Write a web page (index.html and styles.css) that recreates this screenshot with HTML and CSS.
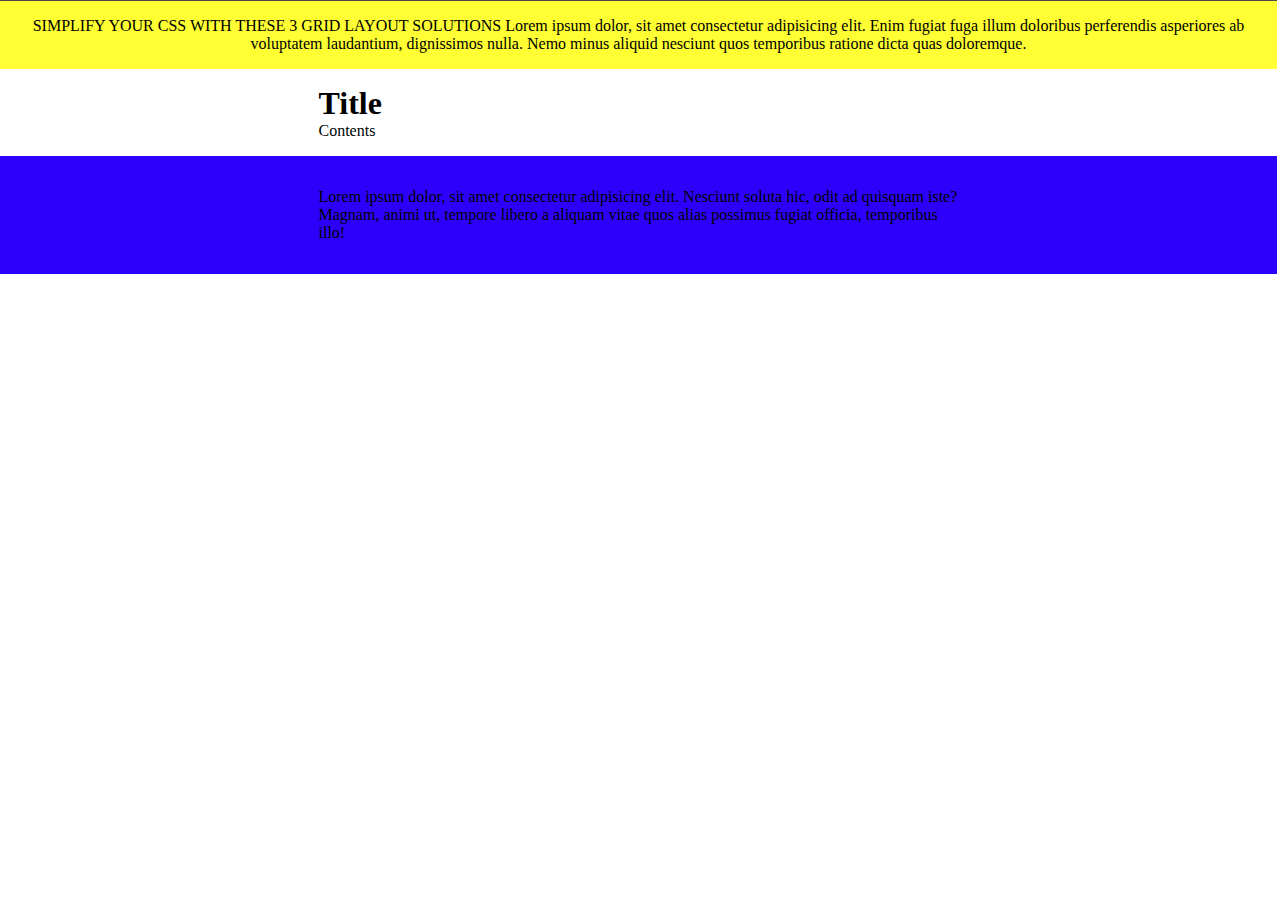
FILE: index.html
```html
<!DOCTYPE html>
<html lang="en">
<head>
<meta charset="utf-8">
<title>Grid Layout</title>
<link rel="stylesheet" href="styles.css">
</head>
<body>
<div class="page">
  <header class="banner">
    <p class="banner-text">SIMPLIFY YOUR CSS WITH THESE 3 GRID LAYOUT SOLUTIONS Lorem ipsum dolor, sit amet consectetur adipisicing elit. Enim fugiat fuga illum doloribus perferendis asperiores ab voluptatem laudantium, dignissimos nulla. Nemo minus aliquid nesciunt quos temporibus ratione dicta quas doloremque.</p>
  </header>
  <section class="intro">
    <div class="column">
      <h1 class="title">Title</h1>
      <div class="contents">Contents</div>
    </div>
  </section>
  <section class="feature">
    <div class="column">
      <p class="feature-text">Lorem ipsum dolor, sit amet consectetur adipisicing elit. Nesciunt soluta hic, odit ad quisquam iste? Magnam, animi ut, tempore libero a aliquam vitae quos alias possimus fugiat officia, temporibus illo!</p>
    </div>
  </section>
</div>
</body>
</html>
```
FILE: styles.css
```css
html, body {
  margin: 0;
  padding: 0;
  background: #ffffff;
}
body {
  font-family: "Liberation Serif", "Times New Roman", serif;
  font-size: 16px;
  color: #000;
  border-top: 1px solid #4a4a4a;
}
.page {
  display: flex;
  flex-direction: column;
}
.banner {
  background: #ffff33;
  padding: 16px 32px;
}
.banner-text {
  margin: 0;
  text-align: center;
  line-height: 18px;
}
.intro, .feature {
  display: grid;
  grid-template-columns: 1fr 640px 1fr;
}
.column {
  grid-column: 2;
}
.intro {
  padding: 16px 0;
}
.title {
  margin: 0;
  font-size: 32px;
  font-weight: bold;
  line-height: 37px;
}
.contents {
  line-height: 18px;
}
.feature {
  background: #2d00fc;
  padding: 32px 0;
}
.feature-text {
  margin: 0;
  line-height: 18px;
}
```
